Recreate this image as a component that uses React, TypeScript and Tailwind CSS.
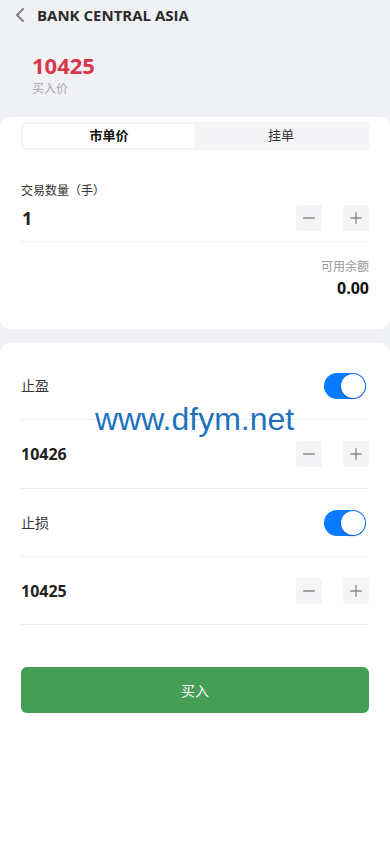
import { Minus, Plus, ChevronLeft } from "lucide-react";

const font = { fontFamily: '"Open Sans", "Noto Sans CJK SC", sans-serif' };

function Stepper() {
  return (
    <div className="flex items-center gap-[21px]">
      <button className="w-[26px] h-[26px] rounded-[3px] bg-[#f5f5f7] flex items-center justify-center text-[#888]">
        <Minus className="w-[18px] h-[18px]" strokeWidth={1.8} />
      </button>
      <button className="w-[26px] h-[26px] rounded-[3px] bg-[#f5f5f7] flex items-center justify-center text-[#888]">
        <Plus className="w-[18px] h-[18px]" strokeWidth={1.8} />
      </button>
    </div>
  );
}

function Toggle() {
  return (
    <div className="w-[42px] h-[26px] rounded-full bg-[#0a7aff] relative mr-[3px]">
      <div className="absolute right-[1px] top-[1px] w-[24px] h-[24px] rounded-full bg-white shadow-[0_1px_2px_rgba(0,0,0,0.25)]" />
    </div>
  );
}

export default function App() {
  return (
    <div className="min-h-[844px] bg-[#f0f1f5] flex flex-col" style={font}>
      {/* Header */}
      <div className="h-[30px] flex items-center pl-[8px] gap-[5px]">
        <ChevronLeft className="w-[24px] h-[24px] text-[#888]" strokeWidth={2.2} />
        <span className="text-[15px] font-bold text-[#2b2b2b]">BANK CENTRAL ASIA</span>
      </div>

      {/* Price */}
      <div className="pl-[32px] pt-[21px] pb-[20px] flex flex-col gap-[2px]">
        <span className="text-[22px] leading-[28px] font-bold text-[#d8374a]">10425</span>
        <span className="text-[12px] leading-[16px] text-[#a8a8a8]">买入价</span>
      </div>

      {/* Order card */}
      <div className="bg-white rounded-[10px] px-[21px] pt-[5px] pb-[29px]">
        <div className="bg-[#f5f5f7] rounded-[4px] p-[2px] flex h-[28px]">
          <div className="flex-1 bg-white rounded-[4px] flex items-center justify-center text-[13px] font-bold text-[#111]">
            市单价
          </div>
          <div className="flex-1 flex items-center justify-center text-[13px] text-[#333]">挂单</div>
        </div>

        <div className="mt-[32px] text-[12px] text-[#333]">交易数量（手）</div>
        <div className="flex items-center justify-between h-[36px] border-b border-[#eeeeee] pb-[5px] box-content">
          <span className="text-[18px] font-bold text-[#222] pl-[1px]">1</span>
          <Stepper />
        </div>

        <div className="flex flex-col items-end mt-[16px]">
          <span className="text-[12px] leading-[18px] text-[#999]">可用余额</span>
          <span className="text-[16px] leading-[24px] font-bold text-[#111]">0.00</span>
        </div>
      </div>

      {/* Stop settings card */}
      <div className="mt-[14px] bg-white rounded-t-[10px] px-[21px] pt-[9px] flex-1 flex flex-col relative">
        <div className="h-[68px] flex items-center justify-between border-b border-[#eeeeee]">
          <span className="text-[14px] text-[#333]">止盈</span>
          <Toggle />
        </div>
        <div className="h-[69px] flex items-center justify-between border-b border-[#eeeeee]">
          <span className="text-[16px] font-bold text-[#222]">10426</span>
          <Stepper />
        </div>
        <div className="h-[68px] flex items-center justify-between border-b border-[#eeeeee]">
          <span className="text-[14px] text-[#333]">止损</span>
          <Toggle />
        </div>
        <div className="h-[68px] flex items-center justify-between border-b border-[#eeeeee]">
          <span className="text-[16px] font-bold text-[#222]">10425</span>
          <Stepper />
        </div>

        <button className="mt-[42px] h-[46px] w-full rounded-[6px] bg-[#459e55] text-white text-[14px]">
          买入
        </button>

        {/* watermark */}
        <div
          className="absolute left-[95px] top-[57px] text-[32px] leading-[38px] text-[#1e72bd] pointer-events-none"
          style={{ fontFamily: '"Liberation Sans", Arial, sans-serif' }}
        >
          www.dfym.net
        </div>
      </div>
    </div>
  );
}
